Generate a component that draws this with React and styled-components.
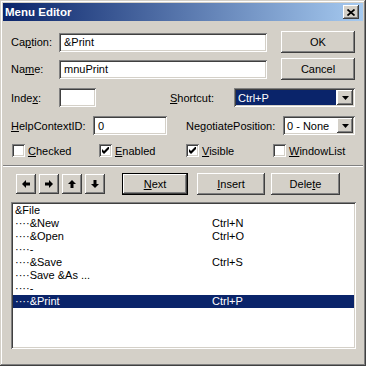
import React from "react";
import styled, { createGlobalStyle, css } from "styled-components";

const FACE = "#d4d0c8";
const NAVY = "#0a246a";

const GlobalStyle = createGlobalStyle`
  *, *::before, *::after { box-sizing: border-box; }
  html, body { margin: 0; padding: 0; background: ${FACE}; }
  body {
    font-family: "Liberation Sans", Arial, sans-serif;
    font-size: 11px;
    color: #000;
    overflow: hidden;
  }
  u { text-decoration: underline; text-underline-offset: 1px; }
`;

const raised = css`
  background: ${FACE};
  box-shadow: inset -1px -1px #404040, inset 1px 1px #fff,
    inset -2px -2px #808080, inset 2px 2px ${FACE};
`;

const sunken = css`
  box-shadow: inset 1px 1px #808080, inset -1px -1px #fff,
    inset 2px 2px #404040, inset -2px -2px ${FACE};
`;

const Window = styled.div`
  width: 366px;
  height: 366px;
  padding: 3px;
  background: ${FACE};
  display: flex;
  flex-direction: column;
  box-shadow: inset -1px -1px #404040, inset 1px 1px ${FACE},
    inset -2px -2px #808080, inset 2px 2px #fff;
`;

const TitleBar = styled.div`
  flex: none;
  height: 18px;
  display: flex;
  align-items: center;
  justify-content: space-between;
  padding: 0 4px 0 2px;
  background: linear-gradient(to right, ${NAVY}, #a6caf0);
`;

const Title = styled.span`
  color: #fff;
  font-weight: bold;
  font-size: 11.5px;
`;

const CaptionButton = styled.div`
  ${raised}
  width: 16px;
  height: 14px;
  display: flex;
  align-items: center;
  justify-content: center;
`;

const Body = styled.div`
  flex: 1;
  display: flex;
  flex-direction: column;
  padding: 10px 6px 0 8px;
`;

const Row = styled.div`
  flex: none;
  display: flex;
  align-items: center;
  height: ${(p) => p.$h}px;
  margin-top: ${(p) => p.$mt || 0}px;
`;

const Label = styled.span`
  flex: none;
  width: ${(p) => p.$w}px;
  margin-left: ${(p) => p.$ml || 0}px;
  white-space: nowrap;
`;

const TextBox = styled.div`
  ${sunken}
  flex: none;
  width: ${(p) => p.$w}px;
  height: 19px;
  background: #fff;
  padding: 0 5px;
  display: flex;
  align-items: center;
  white-space: nowrap;
`;

const PushButton = styled.div`
  ${raised}
  flex: none;
  width: ${(p) => p.$w}px;
  height: ${(p) => p.$h || 22}px;
  margin-left: ${(p) => p.$ml || 0}px;
  display: flex;
  align-items: center;
  justify-content: center;
  white-space: nowrap;
  ${(p) =>
    p.$default &&
    css`
      border: 1px solid #000;
    `}
`;

const Combo = styled.div`
  ${sunken}
  flex: none;
  width: ${(p) => p.$w}px;
  height: 19px;
  background: #fff;
  padding: 2px;
  display: flex;
`;

const ComboText = styled.div`
  flex: 1;
  display: flex;
  align-items: center;
  padding-left: 2px;
  margin-right: 1px;
  white-space: nowrap;
  ${(p) =>
    p.$selected &&
    css`
      background: ${NAVY};
      color: #fff;
    `}
`;

const DropButton = styled.div`
  ${raised}
  flex: none;
  width: 16px;
  display: flex;
  align-items: center;
  justify-content: center;
`;

const CheckRow = styled.div`
  flex: none;
  display: flex;
  height: 17px;
  margin-top: 7px;
  padding-left: 1px;
`;

const CheckItem = styled.label`
  flex: none;
  width: 87px;
  display: flex;
  align-items: center;
  gap: 3px;
`;

const CheckBox = styled.span`
  ${sunken}
  flex: none;
  width: 13px;
  height: 13px;
  background: #fff;
  display: flex;
  align-items: center;
  justify-content: center;
`;

const Separator = styled.div`
  flex: none;
  height: 2px;
  margin: 6px -6px 0 -8px;
  border-top: 1px solid #808080;
  border-bottom: 1px solid #fff;
`;

const ArrowGroup = styled.div`
  flex: none;
  display: flex;
  gap: 3px;
  margin-left: 5px;
`;

const ArrowSvg = styled.svg`
  transform: rotate(${(p) => p.$rot}deg);
`;

const ListBox = styled.div`
  ${sunken}
  flex: none;
  width: 345px;
  height: 147px;
  margin-top: 7px;
  padding: 2px;
  background: #fff;
`;

const ListRow = styled.div`
  display: grid;
  grid-template-columns: 197px 1fr;
  height: 13px;
  line-height: 13px;
  padding-left: 2px;
  white-space: pre;
  ${(p) =>
    p.$selected &&
    css`
      background: ${NAVY};
      color: #fff;
    `}
`;

const Arrow = ({ dir }) => {
  const rot = { left: 0, right: 180, up: 90, down: 270 }[dir];
  return (
    <ArrowSvg $rot={rot} width="8" height="8" viewBox="0 0 8 8">
      <path d="M0 4 L4 0 V2.5 H8 V5.5 H4 V8 Z" fill="#000" />
    </ArrowSvg>
  );
};

const DropArrow = () => (
  <svg width="7" height="4" viewBox="0 0 7 4">
    <path d="M0 0 H7 L3.5 4 Z" fill="#000" />
  </svg>
);

const CheckMark = () => (
  <svg width="7" height="7" viewBox="0 0 7 7">
    <path d="M0 2 L2 4 L7 -1 L7 2 L2 7 L0 5 Z" fill="#000" />
  </svg>
);

const CloseGlyph = () => (
  <svg width="8" height="7" viewBox="0 0 8 7">
    <path d="M0.5 0.5 L7.5 6.5 M7.5 0.5 L0.5 6.5" stroke="#000" strokeWidth="1.7" />
  </svg>
);

const D = "\u00B7\u00B7\u00B7\u00B7";
const items = [
  { caption: "&File", shortcut: "" },
  { caption: D + "&New", shortcut: "Ctrl+N" },
  { caption: D + "&Open", shortcut: "Ctrl+O" },
  { caption: D + "-", shortcut: "" },
  { caption: D + "&Save", shortcut: "Ctrl+S" },
  { caption: D + "Save &As ...", shortcut: "" },
  { caption: D + "-", shortcut: "" },
  { caption: D + "&Print", shortcut: "Ctrl+P", selected: true },
];

const checks = [
  { pre: "", u: "C", post: "hecked", on: false },
  { pre: "", u: "E", post: "nabled", on: true },
  { pre: "", u: "V", post: "isible", on: true },
  { pre: "", u: "W", post: "indowList", on: false },
];

export default function App() {
  return (
    <>
      <GlobalStyle />
      <Window>
        <TitleBar>
          <Title>Menu Editor</Title>
          <CaptionButton>
            <CloseGlyph />
          </CaptionButton>
        </TitleBar>
        <Body>
          <Row $h={22}>
            <Label $w={48}>
              Ca<u>p</u>tion:
            </Label>
            <TextBox $w={208}>&amp;Print</TextBox>
            <PushButton $w={74} $ml={14}>
              OK
            </PushButton>
          </Row>
          <Row $h={22} $mt={5}>
            <Label $w={48}>
              Na<u>m</u>e:
            </Label>
            <TextBox $w={208}>mnuPrint</TextBox>
            <PushButton $w={74} $ml={14}>
              Cancel
            </PushButton>
          </Row>
          <Row $h={19} $mt={8}>
            <Label $w={48}>
              Inde<u>x</u>:
            </Label>
            <TextBox $w={37} />
            <Label $w={64} $ml={74}>
              <u>S</u>hortcut:
            </Label>
            <Combo $w={121}>
              <ComboText $selected>Ctrl+P</ComboText>
              <DropButton>
                <DropArrow />
              </DropButton>
            </Combo>
          </Row>
          <Row $h={19} $mt={9}>
            <Label $w={82}>
              <u>H</u>elpContextID:
            </Label>
            <TextBox $w={74}>0</TextBox>
            <Label $w={97} $ml={19}>
              Ne<u>g</u>otiatePosition:
            </Label>
            <Combo $w={72}>
              <ComboText>0 - None</ComboText>
              <DropButton>
                <DropArrow />
              </DropButton>
            </Combo>
          </Row>
          <CheckRow>
            {checks.map((c) => (
              <CheckItem key={c.u}>
                <CheckBox>{c.on && <CheckMark />}</CheckBox>
                <span>
                  <u>{c.u}</u>
                  {c.post}
                </span>
              </CheckItem>
            ))}
          </CheckRow>
          <Separator />
          <Row $h={22} $mt={6}>
            <ArrowGroup>
              {["left", "right", "up", "down"].map((d) => (
                <PushButton key={d} $w={20} $h={20}>
                  <Arrow dir={d} />
                </PushButton>
              ))}
            </ArrowGroup>
            <PushButton $w={66} $ml={17} $default>
              <span>
                <u>N</u>ext
              </span>
            </PushButton>
            <PushButton $w={68} $ml={9}>
              <span>
                <u>I</u>nsert
              </span>
            </PushButton>
            <PushButton $w={69} $ml={6}>
              <span>
                Dele<u>t</u>e
              </span>
            </PushButton>
          </Row>
          <ListBox>
            {items.map((it, i) => (
              <ListRow key={i} $selected={it.selected}>
                <span>{it.caption}</span>
                <span>{it.shortcut}</span>
              </ListRow>
            ))}
          </ListBox>
        </Body>
      </Window>
    </>
  );
}
